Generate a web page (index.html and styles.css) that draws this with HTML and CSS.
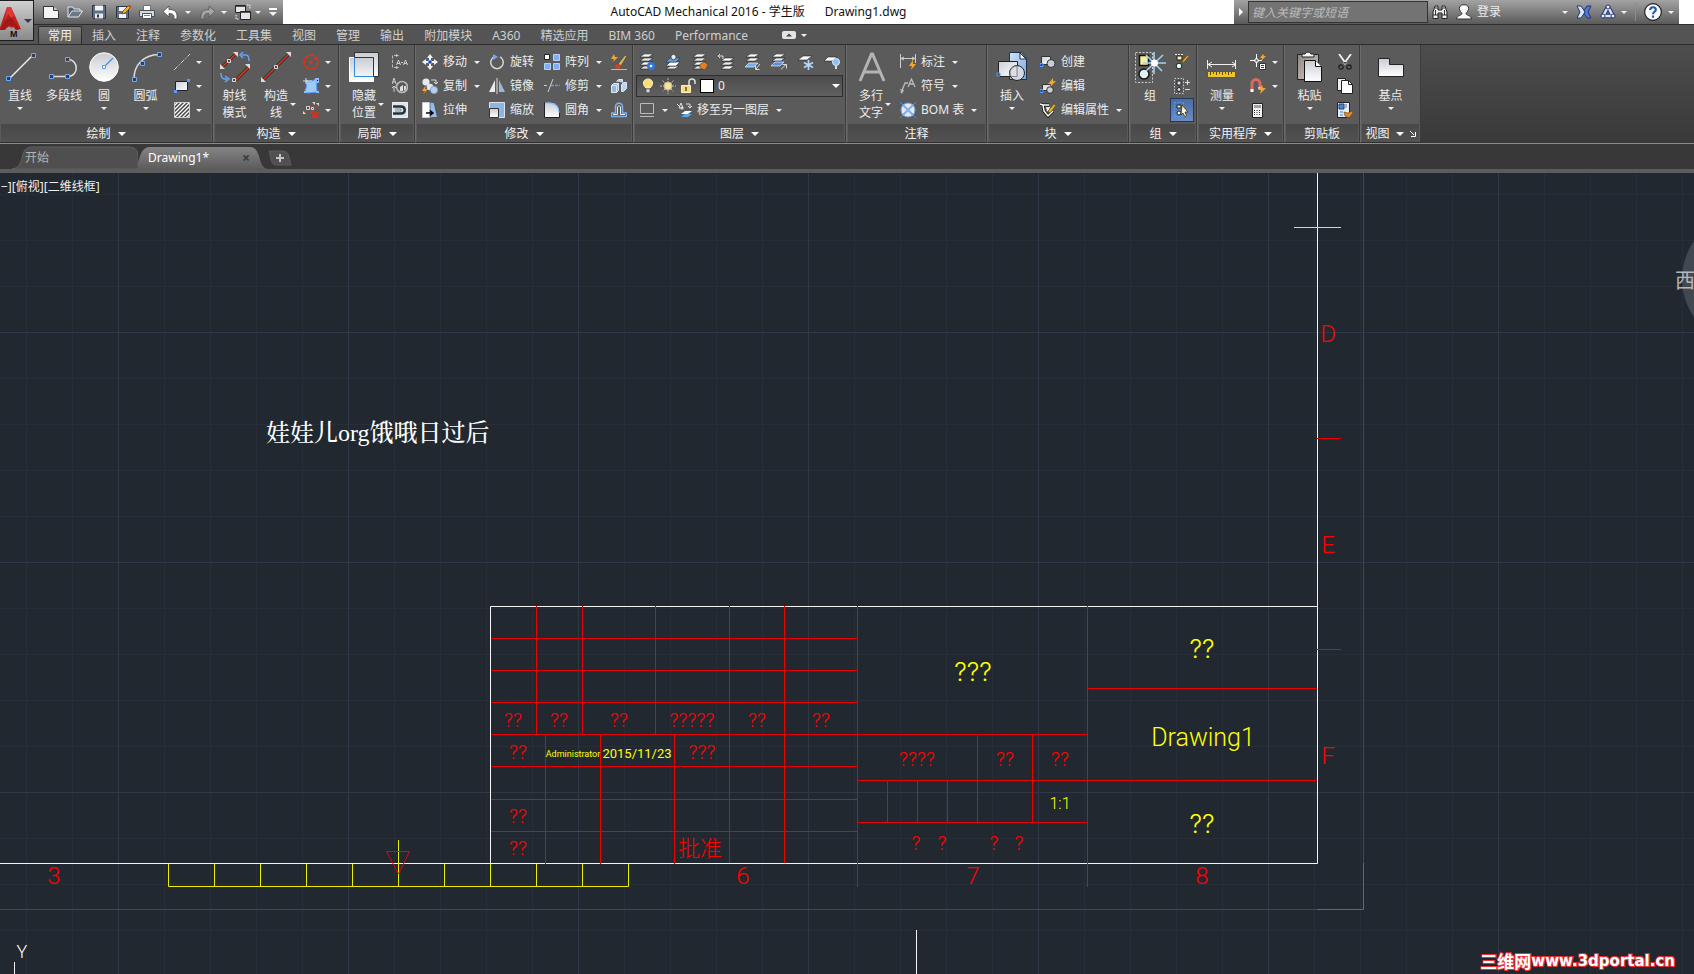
FILE: index.html
```html
<!DOCTYPE html>
<html lang="zh-CN">
<head>
<meta charset="utf-8">
<title>AutoCAD Mechanical 2016</title>
<link rel="stylesheet" href="styles.css">
</head>
<body>
<svg class="sprite" aria-hidden="true">
  <defs>
    <linearGradient id="silver" x1="0" y1="0" x2="1" y2="1"><stop offset="0" stop-color="#c9d0d8"/><stop offset="1" stop-color="#fff"/></linearGradient>
    <linearGradient id="sheet" x1="0" y1="0" x2="0" y2="1"><stop offset="0" stop-color="#c8ccd2"/><stop offset="1" stop-color="#fff"/></linearGradient>
    <linearGradient id="blue" x1="0" y1="0" x2="1" y2="1"><stop offset="0" stop-color="#cfe2f8"/><stop offset="1" stop-color="#7fa6dc"/></linearGradient>
    <linearGradient id="clip" x1="0" y1="0" x2="1" y2="1"><stop offset="0" stop-color="#8f8580"/><stop offset="1" stop-color="#d6cdc8"/></linearGradient>
    <pattern id="hatch" width="4" height="4" patternUnits="userSpaceOnUse"><path d="M-1 5L5-1M-1 1L1-1M3 5L5 3" stroke="#fff" stroke-width="1.300"/></pattern>
  </defs>
  <symbol id="new" viewBox="0 0 16 16"><path d="M.5 2.5h10l5 5v7H.5z" fill="#f4f4f4" stroke="#333"/><path d="M10.500 2.500v4h5" fill="#ccc" stroke="#333"/></symbol>
  <symbol id="open" viewBox="0 0 16 16"><path d="M1 13V3h5l1 2h6v3" fill="#555f6d" stroke="#dfe5ec"/><path d="M1 13l4-6h10.500l-4 6z" fill="#6b7787" stroke="#dfe5ec"/></symbol>
  <symbol id="save" viewBox="0 0 16 16"><path d="M1.500 1.500h13v13h-12l-1-1z" fill="#5f6f86" stroke="#2c3542"/><path d="M4 1.500h8v5H4z" fill="#f2f5f8"/><path d="M4 9.500h8v5H4z" fill="#e5e9ee"/><path d="M6 10.500h2v3H6z" fill="#2c3542"/></symbol>
  <symbol id="saveas" viewBox="0 0 16 16"><path d="M1.500 2.500h12v12h-11l-1-1z" fill="#5f6f86" stroke="#2c3542"/><path d="M4 3h7v4H4zM4 10h7v4H4z" fill="#f2f5f8"/><path d="M7 10l1-3 6-6 2 2-6 6z" fill="#f0b429" stroke="#5a3b0c" stroke-width=".7"/><path d="M13 2l2 2 1-1-2-2z" fill="#d9392b"/></symbol>
  <symbol id="print" viewBox="0 0 16 16"><path d="M4.500 1.500h7v5h-7z" fill="#fff" stroke="#68707c"/><path d="M.5 6.500h15v6H.5z" fill="#d5d9de" stroke="#4b525d"/><path d="M3.500 9.500h9v5h-9z" fill="#fff" stroke="#4b525d"/><path d="M5 11.500h6" stroke="#5b8ed0"/></symbol>
  <symbol id="undo" viewBox="0 0 16 16"><path d="M6 2v3.500c5 0 8 2 8 6.500v3h-3c.5-4-1-5.500-5-5.500V13L0 7.500z" fill="#fff" stroke="#444" stroke-width=".8"/></symbol>
  <symbol id="redo" viewBox="0 0 16 16"><path d="M10 2v3.500c-5 0-8 2-8 6.500v3h3c-.5-4 1-5.500 5-5.500V13l6-5.500z" fill="#a5a5a5" stroke="#555" stroke-width=".8"/></symbol>
  <symbol id="wswitch" viewBox="0 0 16 16"><path d="M.5 1.500h10v7H.5zM5.500 7.500h10v8h-10z" fill="#e2e5e9" stroke="#222"/><path d="M1 2.500h9M6 8.500h9" stroke="#555"/><path d="M12 1h3v4M1 11v4h3" fill="none" stroke="#fff" stroke-dasharray="1.500 1"/></symbol>
  <symbol id="binoc" viewBox="0 0 16 16"><path d="M1 14.500V8l2-6h3v4h4V2h3l2 6v6.500h-5V9H6v5.500z" fill="#e9edf0" stroke="#222"/><path d="M3 4h3M10 4h3M1 11h5M10 11h5M3.500 6v5M12.500 6v5" stroke="#333"/></symbol>
  <symbol id="user" viewBox="0 0 16 16"><path d="M6 9.500C1 4 4 .7 8 .7S15 4 10 9.500c0 2 5 1.500 5.500 5.500H.5C1 11 6 11.500 6 9.500z" fill="#f6f8fa" stroke="#333"/></symbol>
  <symbol id="exch" viewBox="0 0 16 16"><path d="M15 2h-4L7 8l4 6h4l-3-6z" fill="#4f78d8" stroke="#1f3470"/><path d="M1 2h4l4 6-4 6H1l3-6z" fill="#dfe7f8" stroke="#1f3470"/></symbol>
  <symbol id="a360" viewBox="0 0 16 16"><path d="M8 3L3 12h10z" fill="none" stroke="#1f3470" stroke-width="4.500" stroke-linejoin="round"/><path d="M8 3L3 12h10z" fill="none" stroke="#dce4f8" stroke-width="2.500"/><circle cx="8" cy="3" r="2" fill="#eef" stroke="#253a78"/><circle cx="3" cy="12" r="2" fill="#eef" stroke="#253a78"/><circle cx="13" cy="12" r="2" fill="#eef" stroke="#253a78"/></symbol>
  <symbol id="help" viewBox="0 0 16 16"><circle cx="8" cy="8" r="7.400" fill="#f8fafc" stroke="#1b1b1b"/><path d="M5.500 6.200C5.500 3 10.700 3 10.500 6c0 1.800-2.500 1.800-2.500 4M8 11v2" fill="none" stroke="#2458b0" stroke-width="1.900"/></symbol>

  <symbol id="line" viewBox="0 0 32 32"><path d="M5 28L29 4" stroke="#eee" stroke-width="1.500"/><path d="M2.500 25.500h4v4h-4zM27.500 2.500h4v4h-4z" fill="#333e50" stroke="#6fa8ff"/></symbol>
  <symbol id="pline" viewBox="0 0 32 32"><path d="M3 25.500h17c11 0 11-17 0-17h-2" fill="none" stroke="#ddd" stroke-width="1.500"/><path d="M1.500 23.500h4v4h-4zM17.500 23.500h4v4h-4zM17.500 6.500h4v4h-4z" fill="#333e50" stroke="#6fa8ff"/></symbol>
  <symbol id="circle" viewBox="0 0 32 32"><circle cx="16" cy="16" r="14.300" fill="url(#sheet)" stroke="#fff"/><path d="M16 16l9-9" stroke="#4b93e0" stroke-width="1.500"/><path d="M14.500 14.500h3v3h-3z" fill="#fff" stroke="#5b9bff"/></symbol>
  <symbol id="arc" viewBox="0 0 32 32"><path d="M4 28C4 14 13 4 29 3.500" fill="none" stroke="#ddd" stroke-width="1.500"/><path d="M2.500 26.500h4v4h-4zM10.500 10.500h4v4h-4zM27.500 1.500h4v4h-4z" fill="#333e50" stroke="#6fa8ff"/></symbol>
  <symbol id="cline" viewBox="0 0 16 16"><path d="M0 16L16 0" stroke="#ccc" stroke-dasharray="5 1.500 1.500 1.500"/></symbol>
  <symbol id="rect" viewBox="0 0 16 16"><path d="M1.500 3.500h12v9h-12z" fill="url(#silver)" stroke="#222"/><path d="M13 1h3v3h-3zM0 12h3v3H0z" fill="#5b9bff"/></symbol>
  <symbol id="hat" viewBox="0 0 16 16"><path d="M.5.5h15v15H.5z" fill="#444"/><path d="M.5.5h15v15H.5z" fill="url(#hatch)" stroke="#ccc"/></symbol>
  <symbol id="ray" viewBox="0 0 32 32"><path d="M3 16L17 3M17 29L30 16" stroke="#222" stroke-width="3"/><path d="M3 16L17 3M17 29L30 16" stroke="#e03a1a" stroke-width="1.700"/><path d="M14 1h5v5zM1 13v5h5zM26 13h5v5z" fill="#ddd"/><path d="M8.500 8.500h3v3h-3zM13.500 27.500h3v3h-3z" fill="#444" stroke="#ddd"/><path d="M23 4h4q3 0 3 6M24 1l-3 3 3 3M2 22q0 6 4 6h2M6 25l4 3-4 3" fill="none" stroke="#67a6f5" stroke-width="1.500"/></symbol>
  <symbol id="xline" viewBox="0 0 32 32"><path d="M3 29L29 3" stroke="#222" stroke-width="3"/><path d="M3 29L29 3" stroke="#e03a1a" stroke-width="1.600"/><path d="M26 1h5v5zM1 26v5h5z" fill="#ddd"/><path d="M14.500 14.500h3v3h-3z" fill="#444" stroke="#ddd"/></symbol>
  <symbol id="ccirc" viewBox="0 0 16 16"><circle cx="8" cy="8" r="7" fill="none" stroke="#e63214" stroke-width="1.600" stroke-dasharray="5 1.300"/><circle cx="8" cy="8" r="1.500" fill="#e63214"/><path d="M11 3h2v2h-2z" fill="#e63214"/></symbol>
  <symbol id="cpoly" viewBox="0 0 16 16"><path d="M4 15l-2-3c2-2 1-5 2-9l3 1 6-3 1 13z" fill="#9dcbf2" stroke="#5b9bff"/><path d="M1 14h3M13 14h3M3 3h2M13 1h3v3h-3zM6 3h3" stroke="#8bbcff" stroke-width="2"/><path d="M0 3h6M3 0v6" stroke="#ddd"/></symbol>
  <symbol id="cdel" viewBox="0 0 16 16"><path d="M1 11L12 1M7 12L15 3" stroke="#e03a1a" stroke-dasharray="3 1"/><path d="M9 0h3v3zM0 9v3h3zM13 1h3v3z" fill="#ddd"/><path d="M3.500 4.500h3v3h-3zM8.500 5.500h2v2h-2z" fill="#444" stroke="#ddd"/><path d="M9 10l6 6m0-6l-6 6" stroke="#e62b12" stroke-width="2.300"/></symbol>
  <symbol id="hide" viewBox="0 0 32 32"><path d="M6.500 1.500h24v24h-24z" fill="url(#sheet)" stroke="#333"/><path d="M1.500 6.500h24v24h-24z" fill="url(#sheet)" stroke="#fff"/><path d="M6.500 6.500h19v19h-19z" fill="none" stroke="#2f8ae6"/><path d="M6.500 1.500v5h19v19h5" fill="none" stroke="#333"/></symbol>
  <symbol id="sect" viewBox="0 0 16 16"><path d="M5 1.500H.5v12H5" fill="none" stroke="#bbb" stroke-dasharray="3 1.500"/><path d="M4 0l3 1.500L4 3zM4 12l3 1.500L4 15z" fill="#ccc"/><path d="M4.500 11l2-5 2 5M5 9.500h3M9 8.500h2M11.500 11l2-5 2 5M12 9.500h3" fill="none" stroke="#ccc"/></symbol>
  <symbol id="detail" viewBox="0 0 16 16"><circle cx="10" cy="9" r="5.500" fill="none" stroke="#bbb" stroke-width="1.600"/><path d="M8 13V9l3-2v6zM12 13V8h2v3z" fill="#ddd"/><path d="M0 6l2-6 2 6M1 4h3M2 8v6M0 10l2-2 2 2" fill="none" stroke="#ccc"/></symbol>
  <symbol id="brk" viewBox="0 0 16 16"><path d="M.5.5h15v15H.5z" fill="#dfe3e8" stroke="#eee"/><path d="M1 4.500h8c5 0 5 7 0 7H1" fill="none" stroke="#28323e" stroke-width="2.500"/><path d="M3 7h6v2H3" fill="none" stroke="#7b8794"/></symbol>
  <symbol id="move" viewBox="0 0 16 16"><path d="M8 0l3 4H9v2H7V4H5zM8 16l-3-4h2v-2h2v2h2zM0 8l4-3v2h2v2H4v2zM16 8l-4 3V9h-2V7h2V5z" fill="#f2f2f2"/><path d="M6.500 6.500h3v3h-3z" fill="#24467c" stroke="#5b9bff"/></symbol>
  <symbol id="copy" viewBox="0 0 16 16"><circle cx="4" cy="4" r="3.600" fill="#e5e9ee"/><circle cx="8" cy="9" r="3.300" fill="#dfe6ee"/><circle cx="12" cy="12" r="3.700" fill="#b8cdea" stroke="#6e8fbb" stroke-width=".7"/><path d="M9 2h5v4M12 4l2 2 2-2" fill="none" stroke="#ddd"/><path d="M4 7L0 13h3l-2 3 5-5H3z" fill="#f5a623"/></symbol>
  <symbol id="stretch" viewBox="0 0 16 16"><path d="M.5.5h9v15h-9z" fill="#fff" stroke="#ccc"/><path d="M8 .5h4l3.500 15H8z" fill="#9dbbe2" stroke="#2f4a73" stroke-width=".7"/><path d="M4 11h6M8 8.500l3 2.500-3 2.500" fill="none" stroke="#000" stroke-width="1.500"/></symbol>
  <symbol id="rotate" viewBox="0 0 16 16"><path d="M5 2.800A6.300 6.300 0 1 0 11 2.800" fill="none" stroke="#d8d8d8" stroke-width="1.500"/><path d="M4 0l5 3-5 3z" fill="#6fa8ff"/></symbol>
  <symbol id="mirror" viewBox="0 0 16 16"><path d="M6 2v12H0z" fill="#e8ecf0"/><path d="M10 2v12h6z" fill="#9cb6d6"/><path d="M8 0v16" stroke="#ddd"/></symbol>
  <symbol id="scale" viewBox="0 0 16 16"><path d="M.5.5h15v15h-6v-9h-9z" fill="#8fb3e2" stroke="#d9e4f2"/><path d="M.5 6.500h9v9h-9z" fill="url(#sheet)" stroke="#333"/></symbol>
  <symbol id="array" viewBox="0 0 16 16"><path d="M.5.5h5v5h-5z" fill="#fff" stroke="#222"/><path d="M9.500.5h6v6h-6zM.5 9.500h6v6h-6zM9.500 9.500h6v6h-6z" fill="#7fb0f5" stroke="#b5d2ff"/></symbol>
  <symbol id="trim" viewBox="0 0 16 16"><path d="M0 7.500h3M4 14L9 1" stroke="#ccc"/><path d="M7 7.500h9" stroke="#5b9bff" stroke-dasharray="3 1" stroke-width="1.300"/></symbol>
  <symbol id="fillet" viewBox="0 0 16 16"><path d="M.5.5h5q10 1 10 10v5H.5z" fill="url(#sheet)" stroke="#222"/><path d="M1 1h5q9 1 9 9.500" fill="none" stroke="#8fc0ff" stroke-width="1.500"/></symbol>
  <symbol id="erase" viewBox="0 0 16 16"><path d="M7 10l7-9 2 1-6 10z" fill="#d9b06a" stroke="#553"/><path d="M4 14c0-3 1-4 3-4l3 2-2 3z" fill="#d8411c"/><path d="M3 0L0 5h3l-1 3 5-5H4z" fill="#f5a623"/><path d="M0 15.500h16" stroke="#bbb"/></symbol>
  <symbol id="explode" viewBox="0 0 16 16"><path d="M.5 7.500l2-2h5v7l-2 2h-5z" fill="#9ab8de" stroke="#dbe8fa"/><path d="M.5 7.500h5v7M5.500 7.500l2-2" fill="none" stroke="#dbe8fa"/><path d="M5.500 3.500l2-2h4v3M10.500 6.500l2-2h3v6l-3 3h-2z" fill="#bcd2ee" stroke="#dbe8fa"/></symbol>
  <symbol id="offset" viewBox="0 0 16 16"><path d="M.5 14.500h15v-3.500h-4V5C11.500 0 4.500 0 4.500 5v6h-4z" fill="none" stroke="#7fb0f5" stroke-width="1.500"/><path d="M2 12.500h4.500V5q1.500-3 3 0v7.500H14" fill="none" stroke="#eee"/></symbol>

  <symbol id="stack" viewBox="0 0 16 16"><path d="M5 0h9l-4 3H1z" fill="#fff" stroke="#222" stroke-width=".6"/><path d="M5 4h9l-4 3H1z" fill="#e6ebf0" stroke="#222" stroke-width=".6"/><path d="M5 8h9l-4 3H1z" fill="#fff" stroke="#222" stroke-width=".6"/><path d="M5 12h9l-4 3H1z" fill="#dde3ea" stroke="#222" stroke-width=".6"/></symbol>
  <symbol id="ly1" viewBox="0 0 16 16"><use href="#stack"/><circle cx="12" cy="12" r="4" fill="#2b7bd6"/><circle cx="12" cy="12" r="1.300" fill="#fff"/></symbol>
  <symbol id="ly2" viewBox="0 0 16 16"><path d="M5 12h9l-4 3H1z" fill="#dde3ea" stroke="#222" stroke-width=".6"/><path d="M5 8h10l-4 4H1z" fill="#fff" stroke="#222" stroke-width=".6"/><path d="M5 4h10l-4 4H1z" fill="#5f9fe8" stroke="#1c3d6b" stroke-width=".6"/><circle cx="8.500" cy="3" r="2.700" fill="#eee" stroke="#444"/></symbol>
  <symbol id="ly3" viewBox="0 0 16 16"><use href="#stack"/><path d="M8 10l5-2 3 3-3 5-5-2z" fill="#d9822b" stroke="#6b3d0c" stroke-width=".6"/></symbol>
  <symbol id="ly4" viewBox="0 0 16 16"><path d="M7 4h9l-4 3H3z" fill="#fff" stroke="#222" stroke-width=".6"/><path d="M7 8h9l-4 3H3z" fill="#e6ebf0" stroke="#222" stroke-width=".6"/><path d="M7 12h9l-4 3H3z" fill="#fff" stroke="#222" stroke-width=".6"/><path d="M0 2h5v3M2 0L0 2l2 2" fill="none" stroke="#ddd"/></symbol>
  <symbol id="ly5" viewBox="0 0 16 16"><path d="M5 0h9l-4 3H1z" fill="#fff" stroke="#222" stroke-width=".6"/><path d="M5 4h9l-4 3H1z" fill="#fff" stroke="#222" stroke-width=".6"/><path d="M4 9h9l-4 4H0z" fill="#6fb1f0" stroke="#fff" stroke-width=".6"/><path d="M15 10l-4 5M10.500 12v3.500h4" fill="none" stroke="#ddd"/></symbol>
  <symbol id="ly6" viewBox="0 0 16 16"><path d="M5 0h9l-4 3H1z" fill="#fff" stroke="#222" stroke-width=".6"/><path d="M5 4h9l-4 3H1z" fill="#dfe8f6" stroke="#222" stroke-width=".6"/><path d="M4 8h9l-4 4H0z" fill="#5a8de8" stroke="#fff" stroke-width=".6"/><path d="M10 15.500l5-5M11.500 10.500h4v4" fill="none" stroke="#ddd"/></symbol>
  <symbol id="ly7" viewBox="0 0 16 16"><path d="M5 2h9l-5 4H0z" fill="#fff" stroke="#222" stroke-width=".6"/><path d="M10.500 6v10M6 8.500l9 5M15 8.500l-9 5" stroke="#b5d6f8" stroke-width="1.700"/></symbol>
  <symbol id="ly8" viewBox="0 0 16 16"><path d="M4 3h9L8 7H0z" fill="#fff" stroke="#222" stroke-width=".6"/><circle cx="12" cy="8" r="3.500" fill="#8dc0f4" stroke="#dcecff"/><path d="M11 12h2v3h-2z" fill="#ddd"/></symbol>
  <symbol id="bulb" viewBox="0 0 16 16"><path d="M6 10C1 5 4 1 8 1s7 4 2 9z" fill="#f8dd7a" stroke="#fff3c0"/><path d="M6 11h4v3l-2 1-2-1z" fill="#d5d5d5" stroke="#444" stroke-width=".6"/></symbol>
  <symbol id="sun" viewBox="0 0 16 16"><path d="M8 0v16M0 8h16M2.500 2.500l11 11M13.500 2.500l-11 11" stroke="#b9b9b9" stroke-dasharray="2 1"/><circle cx="8" cy="8" r="4" fill="#f6e2a2" stroke="#c9b878"/></symbol>
  <symbol id="lock" viewBox="0 0 16 16"><path d="M9 7V4c0-4 6-4 6 0v2" fill="none" stroke="#ddd" stroke-width="1.500"/><path d="M1.500 7.500h9v7h-9z" fill="#f4d98c" stroke="#fff0c0"/><path d="M6 9v4" stroke="#6a5213" stroke-width="1.500"/></symbol>
  <symbol id="lyf" viewBox="0 0 16 16"><path d="M1.500 1.500h13v10h-13z" fill="none" stroke="#bbb"/><path d="M1 14.500h14" stroke="#bbb"/></symbol>
  <symbol id="lymove" viewBox="0 0 16 16"><path d="M1 2l3 3M5 1l2 5H3z" fill="none" stroke="#ddd"/><circle cx="6" cy="6" r="1.500" fill="#ddd"/><path d="M10 2h4v4M12 4l2 2 2-2" fill="none" stroke="#ddd"/><path d="M9 9h7l-4 3H5z" fill="#fff"/><path d="M9 12h7l-4 3H5z" fill="#5aa7ee"/></symbol>

  <symbol id="mtext" viewBox="0 0 32 32"><path d="M5 30L16.500 3h1L29 30M9.500 21h15" fill="none" stroke="#b4b4b4" stroke-width="3"/></symbol>
  <symbol id="dim" viewBox="0 0 16 16"><path d="M.5 0v14M15.500 0v9M1 4.500h14M4 3L1 4.500 4 6M12 3l3 1.500L12 6" fill="none" stroke="#ccc"/><path d="M13 6l-4 6h3l-1 4 5-6h-3z" fill="#f5a623"/></symbol>
  <symbol id="sym" viewBox="0 0 16 16"><path d="M1 15l4-10h3M8 9l3.500-8L15 9M9 6h5" fill="none" stroke="#bbb" stroke-width="1.300"/><path d="M0 11l2 5 2-4z" fill="#bbb"/></symbol>
  <symbol id="bom" viewBox="0 0 16 16"><circle cx="8" cy="8" r="7" fill="#e1eaf6" stroke="#6f9fe0"/><path d="M0 0l16 16M16 0L0 16" stroke="#4f8fee"/><path d="M3 3l10 10M13 3L3 13" stroke="#86aee8" stroke-width="2"/></symbol>
  <symbol id="insert" viewBox="0 0 32 32"><path d="M13.500 1.500h12l5 6v21h-17z" fill="url(#blue)" stroke="#1f2f4a"/><path d="M24 2v6h6z" fill="#fff" stroke="#1f2f4a"/><path d="M2.500 10.500h19v15h-19z" fill="url(#silver)" stroke="#222"/><circle cx="21" cy="22" r="7.500" fill="#d9dde2" fill-opacity=".9" stroke="#222"/><path d="M14 22a7 7 0 0 1 7-7v10.500h-6z" fill="none" stroke="#888"/><path d="M1 22h3v3H1z" fill="#24467c" stroke="#5b9bff"/></symbol>
  <symbol id="bnew" viewBox="0 0 16 16"><path d="M1.500 2.500h9v8h-9z" fill="url(#silver)" stroke="#333"/><circle cx="11" cy="9.500" r="4" fill="#c9ced5" stroke="#333"/><path d="M0 9.500h3v3H0z" fill="#24467c" stroke="#5b9bff"/></symbol>
  <symbol id="bedit" viewBox="0 0 16 16"><path d="M2.500 6.500h8v6h-8z" fill="url(#silver)" stroke="#333"/><circle cx="10" cy="12" r="3.300" fill="#c9ced5" stroke="#333"/><path d="M13 0L8 6h3l-1 3 6-6h-3z" fill="#f5a623"/><path d="M0 11.500h3v3H0z" fill="#24467c" stroke="#5b9bff"/></symbol>
  <symbol id="battr" viewBox="0 0 16 16"><path d="M0 2l3 1h6M3 3l1 6 4 5 5-5" fill="none" stroke="#111" stroke-width="3"/><path d="M0 2l3 1h6M3 3l1 6 4 5 5-5M6 6h3l-2 3" fill="none" stroke="#fff" stroke-width="1.500"/><path d="M8 11l1-3 5-6 2 1-5 7z" fill="#f0b429" stroke="#5a3b0c" stroke-width=".6"/></symbol>
  <symbol id="group" viewBox="0 0 32 32"><path d="M1.500 1.500h17v30h-17z" fill="none" stroke="#ccc" stroke-dasharray="2 1.500"/><path d="M5.500 4.500h9v10h-9z" fill="#f5ee9a" stroke="#111" stroke-width="1.500"/><circle cx="10" cy="23" r="5" fill="#dfeff2" stroke="#111" stroke-width="1.500"/><path d="M20 1v22M9 12h23M12 20L29 4M12 4l16 16" stroke="#9fd2f5" stroke-width="1.600"/><circle cx="20.500" cy="12" r="3.500" fill="#fff"/></symbol>
  <symbol id="gedit" viewBox="0 0 16 16"><path d="M1 .5h9" stroke="#eee" stroke-dasharray="2 1"/><path d="M3 2h5v4H3z" fill="#f5ee9a" stroke="#222"/><circle cx="5" cy="12" r="2.800" fill="#dff" stroke="#222"/><path d="M8 9l1-3 5-5 1 1-5 6z" fill="#f0b429" stroke="#5a3b0c" stroke-width=".5"/></symbol>
  <symbol id="gadd" viewBox="0 0 16 16"><path d="M.5.5h9v15h-9z" fill="none" stroke="#ccc" stroke-dasharray="1.500 1.500"/><path d="M3 3h4v4H3z" fill="#ddd" stroke="#222"/><circle cx="5" cy="11.500" r="2" fill="#cdf" stroke="#222"/><path d="M11 4.500h5M13.500 2v5M11 11.500h5" stroke="#ddd"/></symbol>
  <symbol id="gsel" viewBox="0 0 16 16"><path d="M.5.5h9v14h-9z" fill="none" stroke="#5b9bff" stroke-dasharray="1.500 1.500"/><path d="M3 3h4v3H3z" fill="#f5ee9a" stroke="#222"/><circle cx="5" cy="11" r="2" fill="#dfe" stroke="#222"/><path d="M8 3l6 7h-3l1.500 4-1.500 1-2-4-2 2z" fill="#fff7c8" stroke="#222" stroke-width=".7"/></symbol>
  <symbol id="measure" viewBox="0 0 32 32"><path d="M1.500 9v9M29.500 9v9M2 13.500h28M6 11l-4 2.500L6 16M26 11l4 2.500-4 2.500" fill="none" stroke="#eee"/><path d="M1.500 20.500h28v6h-28z" fill="#efc52c" stroke="#6e5710"/><path d="M4.500 21v3M7.500 21v2M10.500 21v3M13.500 21v2M16.500 21v3M19.500 21v2M22.500 21v3M25.500 21v2" stroke="#5d490c"/></symbol>
  <symbol id="qsel" viewBox="0 0 16 16"><path d="M0 6.500h12M6.500 0v13" stroke="#fff"/><path d="M5 5h3v3H5z" fill="#555" stroke="#fff"/><path d="M9.500 9.500h6v6h-6z" fill="#fff" stroke="#333"/><path d="M11 11.500h3M11 13.500h3" stroke="#333"/><path d="M13 0l-3 4h2l-1 3 5-5h-2z" fill="#f5a623"/></symbol>
  <symbol id="magnet" viewBox="0 0 16 16"><path d="M2 13V6c0-6 8-6 8 0v5" fill="none" stroke="#d96a63" stroke-width="3"/><path d="M.5 11h3v3h-3zM8.500 9h3v2h-3z" fill="#fff"/><path d="M12 7l-4 5h3l-1 4 6-6h-3z" fill="#f5a623"/></symbol>
  <symbol id="calc" viewBox="0 0 16 16"><path d="M2.500 1.500h10v14h-10z" fill="#f2f2f2" stroke="#222"/><path d="M4 3h7v3H4z" fill="#9aa4b0"/><path d="M4 8.500h7M4 10.500h7M4 12.500h7" stroke="#333" stroke-dasharray="1 1.500"/></symbol>
  <symbol id="paste" viewBox="0 0 32 32"><path d="M3.500 3.500h21v25h-21z" fill="url(#clip)" stroke="#222"/><path d="M8 5V3h3q3-4 6 0h3v3H8z" fill="#f5f5f5" stroke="#222"/><path d="M10.500 9.500h11l6 6v15h-17z" fill="url(#sheet)" stroke="#111"/><path d="M21.500 9.500v6h6" fill="#fff" stroke="#111"/></symbol>
  <symbol id="cut" viewBox="0 0 16 16"><path d="M2 0l8 11M14 0L6 11" stroke="#f2f2f2" stroke-width="1.800"/><circle cx="4" cy="13" r="2.200" fill="none" stroke="#1c1c1c" stroke-width="1.200"/><circle cx="12" cy="13" r="2.200" fill="none" stroke="#1c1c1c" stroke-width="1.200"/><path d="M6 11l2-3 2 3" fill="none" stroke="#1c1c1c"/></symbol>
  <symbol id="cpy" viewBox="0 0 16 16"><path d="M.5.5h8v12h-8z" fill="#eee" stroke="#222"/><path d="M4.500 2.500h7l4 4v9h-11z" fill="#fff" stroke="#222"/><path d="M11.500 2.500v4h4" fill="none" stroke="#222"/></symbol>
  <symbol id="match" viewBox="0 0 16 16"><path d="M.5.5h12v15H.500z" fill="#e8eef6" stroke="#222"/><path d="M2 2h5v5H2z" fill="#4a86d8" stroke="#1d3f74"/><path d="M9 2v4M3 10h3M3 13h3" stroke="#3f78c4"/><path d="M7 10l4 1 4-2 1 2-4 5-4-2z" fill="#dc8a30" stroke="#6b3d0c" stroke-width=".6"/></symbol>
  <symbol id="base" viewBox="0 0 32 32"><path d="M3.500 7.500h11v6h14v12h-25z" fill="url(#sheet)" stroke="#222"/></symbol>
</svg>

<header class="titlebar">
  <div class="quick">
    <button aria-label="新建"><svg class="i16"><use href="#new"/></svg></button>
    <button aria-label="打开"><svg class="i16"><use href="#open"/></svg></button>
    <button aria-label="保存"><svg class="i16"><use href="#save"/></svg></button>
    <button aria-label="另存为"><svg class="i16"><use href="#saveas"/></svg></button>
    <button aria-label="打印"><svg class="i16"><use href="#print"/></svg></button>
    <button aria-label="放弃"><svg class="i16"><use href="#undo"/></svg><i class="dd"></i></button>
    <button aria-label="重做"><svg class="i16"><use href="#redo"/></svg><i class="dd"></i></button>
    <button class="ws" aria-label="工作空间"><svg class="i16"><use href="#wswitch"/></svg><i class="dd"></i></button>
    <button class="more" aria-label="自定义"><i class="dd"></i></button>
  </div>
  <h1 class="caption"><span>AutoCAD Mechanical 2016 - 学生版</span><span>Drawing1.dwg</span></h1>
  <div class="info">
    <button class="fold" aria-label="收拢"><i class="right"></i></button>
    <input class="search" type="text" aria-label="搜索" placeholder="键入关键字或短语">
    <button aria-label="查找"><svg class="i16"><use href="#binoc"/></svg></button>
    <button class="login"><svg class="i16"><use href="#user"/></svg>登录<i class="dd"></i></button>
    <button aria-label="Exchange"><svg class="i16"><use href="#exch"/></svg></button>
    <button aria-label="A360"><svg class="i16"><use href="#a360"/></svg><i class="dd"></i></button>
    <button class="help" aria-label="帮助"><svg class="i18"><use href="#help"/></svg><i class="dd"></i></button>
  </div>
</header>
<button class="appmenu" aria-label="应用程序菜单">
  <svg width="22" height="40" viewBox="0 0 22 40"><path d="M-1 29L7 6h4l10 22-5 1-2-4-2 2-4-2-3 4z" fill="#c31f1f"/><path d="M7 6h4l3 9-9 5z" fill="#e23a34"/><path d="M8 13l-8 16h4l7-5 5 5 4-1z" fill="#8f1212" fill-opacity=".6"/></svg>
  <b>M</b><i class="dd dark"></i>
</button>

<nav class="tabs">
  <button class="tab on">常用</button><button class="tab">插入</button><button class="tab">注释</button><button class="tab">参数化</button><button class="tab">工具集</button><button class="tab">视图</button><button class="tab">管理</button><button class="tab">输出</button><button class="tab">附加模块</button><button class="tab">A360</button><button class="tab">精选应用</button><button class="tab">BIM 360</button><button class="tab">Performance</button>
  <button class="mini" aria-label="最小化功能区"><svg width="14" height="8" viewBox="0 0 14 8"><rect width="14" height="8" rx="2" fill="#e4e4e4"/><path d="M4 5.500h6L7 2.500z" fill="#444"/></svg><i class="dd"></i></button>
</nav>

<div class="ribbon">
  <section class="panel draw">
    <div class="body">
      <button class="big"><svg class="i32"><use href="#line"/></svg><span>直线</span><i class="dd"></i></button>
      <button class="big"><svg class="i32"><use href="#pline"/></svg><span>多段线</span></button>
      <button class="big"><svg class="i32"><use href="#circle"/></svg><span>圆</span><i class="dd"></i></button>
      <button class="big"><svg class="i32"><use href="#arc"/></svg><span>圆弧</span><i class="dd"></i></button>
      <div class="col">
        <button aria-label="中心线"><svg class="i16"><use href="#cline"/></svg><i class="dd"></i></button>
        <button aria-label="矩形"><svg class="i16"><use href="#rect"/></svg><i class="dd"></i></button>
        <button aria-label="图案填充"><svg class="i16"><use href="#hat"/></svg><i class="dd"></i></button>
      </div>
    </div>
    <button class="name">绘制<i class="dd lg"></i></button>
  </section>
  <section class="panel cons">
    <div class="body">
      <button class="big"><svg class="i32"><use href="#ray"/></svg><span>射线<br>模式</span></button>
      <button class="big side"><svg class="i32"><use href="#xline"/></svg><span>构造<br>线</span><i class="dd"></i></button>
      <div class="col">
        <button aria-label="构造圆"><svg class="i16"><use href="#ccirc"/></svg><i class="dd"></i></button>
        <button aria-label="投影"><svg class="i16"><use href="#cpoly"/></svg><i class="dd"></i></button>
        <button aria-label="删除构造线"><svg class="i16"><use href="#cdel"/></svg><i class="dd"></i></button>
      </div>
    </div>
    <button class="name">构造<i class="dd lg"></i></button>
  </section>
  <section class="panel local">
    <div class="body">
      <button class="big side"><svg class="i32"><use href="#hide"/></svg><span>隐藏<br>位置</span><i class="dd"></i></button>
      <div class="col">
        <button aria-label="剖切线"><svg class="i16"><use href="#sect"/></svg></button>
        <button aria-label="局部视图"><svg class="i16"><use href="#detail"/></svg></button>
        <button aria-label="断开"><svg class="i16"><use href="#brk"/></svg></button>
      </div>
    </div>
    <button class="name">局部<i class="dd lg"></i></button>
  </section>
  <section class="panel modify">
    <div class="body">
      <button><svg class="i16"><use href="#move"/></svg>移动<i class="dd"></i></button>
      <button><svg class="i16"><use href="#rotate"/></svg>旋转</button>
      <button><svg class="i16"><use href="#array"/></svg>阵列<i class="dd"></i></button>
      <button aria-label="删除"><svg class="i16"><use href="#erase"/></svg></button>
      <button><svg class="i16"><use href="#copy"/></svg>复制<i class="dd"></i></button>
      <button><svg class="i16"><use href="#mirror"/></svg>镜像</button>
      <button><svg class="i16"><use href="#trim"/></svg>修剪<i class="dd"></i></button>
      <button aria-label="分解"><svg class="i16"><use href="#explode"/></svg></button>
      <button><svg class="i16"><use href="#stretch"/></svg>拉伸</button>
      <button><svg class="i16"><use href="#scale"/></svg>缩放</button>
      <button><svg class="i16"><use href="#fillet"/></svg>圆角<i class="dd"></i></button>
      <button aria-label="偏移"><svg class="i16"><use href="#offset"/></svg></button>
    </div>
    <button class="name">修改<i class="dd lg"></i></button>
  </section>
  <section class="panel layer">
    <div class="body">
      <div class="row spread">
        <button aria-label="图层特性"><svg class="i16"><use href="#ly1"/></svg></button>
        <button aria-label="置为当前"><svg class="i16"><use href="#ly2"/></svg></button>
        <button aria-label="匹配图层"><svg class="i16"><use href="#ly3"/></svg></button>
        <button aria-label="上一个图层"><svg class="i16"><use href="#ly4"/></svg></button>
        <button aria-label="隔离"><svg class="i16"><use href="#ly5"/></svg></button>
        <button aria-label="取消隔离"><svg class="i16"><use href="#ly6"/></svg></button>
        <button aria-label="冻结"><svg class="i16"><use href="#ly7"/></svg></button>
        <button aria-label="关闭图层"><svg class="i16"><use href="#ly8"/></svg></button>
      </div>
      <div class="row">
        <div class="combo">
          <svg class="i16"><use href="#bulb"/></svg><svg class="i16"><use href="#sun"/></svg><svg class="i16"><use href="#lock"/></svg><i class="swatch"></i>
          <select aria-label="当前图层"><option>0</option></select><i class="dd lg"></i>
        </div>
      </div>
      <div class="row to">
        <button aria-label="图层过滤"><svg class="i16"><use href="#lyf"/></svg><i class="dd"></i></button>
        <button><svg class="i16"><use href="#lymove"/></svg>移至另一图层<i class="dd"></i></button>
      </div>
    </div>
    <button class="name">图层<i class="dd lg"></i></button>
  </section>
  <section class="panel note">
    <div class="body">
      <button class="big side"><svg class="i32"><use href="#mtext"/></svg><span>多行<br>文字</span><i class="dd"></i></button>
      <div class="col">
        <button><svg class="i16"><use href="#dim"/></svg>标注<i class="dd"></i></button>
        <button><svg class="i16"><use href="#sym"/></svg>符号<i class="dd"></i></button>
        <button><svg class="i16"><use href="#bom"/></svg>BOM 表<i class="dd"></i></button>
      </div>
    </div>
    <div class="name">注释</div>
  </section>
  <section class="panel block">
    <div class="body">
      <button class="big"><svg class="i32"><use href="#insert"/></svg><span>插入</span><i class="dd"></i></button>
      <div class="col">
        <button><svg class="i16"><use href="#bnew"/></svg>创建</button>
        <button><svg class="i16"><use href="#bedit"/></svg>编辑</button>
        <button><svg class="i16"><use href="#battr"/></svg>编辑属性<i class="dd"></i></button>
      </div>
    </div>
    <button class="name">块<i class="dd lg"></i></button>
  </section>
  <section class="panel grp">
    <div class="body">
      <button class="big"><svg class="i32"><use href="#group"/></svg><span>组</span></button>
      <div class="col">
        <button aria-label="组编辑"><svg class="i16"><use href="#gedit"/></svg></button>
        <button aria-label="添加到组"><svg class="i16"><use href="#gadd"/></svg></button>
        <button class="on" aria-label="组选择"><svg class="i16"><use href="#gsel"/></svg></button>
      </div>
    </div>
    <button class="name">组<i class="dd lg"></i></button>
  </section>
  <section class="panel util">
    <div class="body">
      <button class="big"><svg class="i32"><use href="#measure"/></svg><span>测量</span><i class="dd"></i></button>
      <div class="col">
        <button aria-label="快速选择"><svg class="i16"><use href="#qsel"/></svg><i class="dd"></i></button>
        <button aria-label="捕捉"><svg class="i16"><use href="#magnet"/></svg><i class="dd"></i></button>
        <button aria-label="计算器"><svg class="i16"><use href="#calc"/></svg></button>
      </div>
    </div>
    <button class="name">实用程序<i class="dd lg"></i></button>
  </section>
  <section class="panel clipb">
    <div class="body">
      <button class="big"><svg class="i32"><use href="#paste"/></svg><span>粘贴</span><i class="dd"></i></button>
      <div class="col">
        <button aria-label="剪切"><svg class="i16"><use href="#cut"/></svg></button>
        <button aria-label="复制"><svg class="i16"><use href="#cpy"/></svg></button>
        <button aria-label="特性匹配"><svg class="i16"><use href="#match"/></svg></button>
      </div>
    </div>
    <div class="name">剪贴板</div>
  </section>
  <section class="panel view">
    <div class="body">
      <button class="big"><svg class="i32"><use href="#base"/></svg><span>基点</span><i class="dd"></i></button>
    </div>
    <button class="name">视图<i class="dd lg"></i><svg class="launch" width="6" height="6" viewBox="0 0 6 6"><path d="M0 0l4 4M5.500 1v4.500H1" fill="none" stroke="#fff"/></svg></button>
  </section>
</div>

<div class="files">
  <button class="file start"><svg viewBox="0 0 126 23" preserveAspectRatio="none"><path d="M0 23C8 22 9 16 11 8Q13 1 20 1H117Q126 1 126 10V23z" fill="#4f4f4f" stroke="#606060"/></svg><span>开始</span></button>
  <button class="file open"><svg viewBox="0 0 130 23" preserveAspectRatio="none"><defs><linearGradient id="tabfill" x2="0" y2="1"><stop offset="0" stop-color="#858585"/><stop offset="1" stop-color="#5c5c5c"/></linearGradient></defs><path d="M0 16C2 12 3 1 12 1H112C124 1 119 22 130 23H0z" fill="url(#tabfill)"/></svg><span>Drawing1*</span><em>×</em></button>
  <button class="plus" aria-label="新图形"><svg width="24" height="16" viewBox="0 0 24 16"><path d="M1 1h14q5 0 6 6l2 8H8Q4 15 3 9z" fill="#505050" stroke="#5c5c5c"/><path d="M12 4v8M8 8h8" stroke="#c4c4c4" stroke-width="2"/></svg></button>
</div>

<main class="canvas">
  <svg class="drawing" role="img" aria-label="图纸">
    <defs>
      <pattern id="minor" x="26" y="21" width="46" height="46" patternUnits="userSpaceOnUse"><path d="M.5 0v46M0 .5h46" stroke="#272e38"/></pattern>
      <pattern id="major" x="118" y="159" width="230" height="230" patternUnits="userSpaceOnUse"><path d="M.5 0v230M0 .5h230" stroke="#303746"/></pattern>
    </defs>
    <rect class="fill-minor" width="100%" height="100%"/>
    <rect class="fill-major" width="100%" height="100%"/>
    <g transform="translate(0 -173)">
      <circle class="cube" cx="1748" cy="279" r="66"/>
      <text class="cube-text" x="1675" y="288">西</text>
      <path class="ln y" d="M168.500 863v23.500H628.500V863M214.500 863v23M260.500 863v23M306.500 863v23M352.500 863v23M398.500 840v46M444.500 863v23M490.500 863v23M536.500 863v23M582.500 863v23"/>
      <path class="ln w" d="M0 863.500H1317.500V173M490.500 863V606.500H1317"/>
      <path class="ln y" d="M1294 227.500h47M398.500 840v34"/>
      <path class="ln r" d="M386.500 851.500h23L398.500 874z"/>
      <path class="ln r" d="M0 909.500H1363.500V173M1317 438.500h24M1317 649.500h24"/>
      <path class="ln r" d="M536.500 606v128M582.500 606v128M655.500 606v128M729.500 606v257M784.500 606v257M857.500 606v281M1087.500 606v281M545.500 734v130M600.500 734v130M674.500 734v130M977.500 734v88M1032.500 734v88M887.500 780v42M917.500 780v42M947.500 780v42"/>
      <path class="ln r" d="M491 638.500h366M491 670.500h366M491 702.500h366M491 734.500h596M491 766.500h366M491 799.500h366M491 831.500h366M857 780.500h460M857 822.500h230M1087 688.500h230"/>
      <path class="ln hot" d="M1317 909.500h46.500V863"/>
      <path class="ln w" d="M916.500 930v44M14.500 962v12"/>
      <g class="cad red small">
        <text x="513" y="727">??</text><text x="559" y="727">??</text><text x="619" y="727">??</text><text x="692" y="727">?????</text><text x="757" y="727">??</text><text x="821" y="727">??</text>
        <text x="518" y="759">??</text><text x="702" y="759">???</text><text x="518" y="823">??</text><text x="518" y="855">??</text>
        <text x="917" y="766">????</text><text x="1005" y="766">??</text><text x="1060" y="766">??</text>
        <text x="916" y="850">?</text><text x="942" y="850">?</text><text x="994" y="850">?</text><text x="1019" y="850">?</text>
      </g>
      <text class="cad red cjk" x="700" y="856">批准</text>
      <g class="cad red zone">
        <text x="54" y="884">3</text><text x="743" y="884">6</text><text x="973" y="884">7</text><text x="1202" y="884">8</text>
        <text x="1328" y="342">D</text><text x="1328" y="553">E</text><text x="1328" y="764">F</text>
      </g>
      <g class="cad yel large">
        <text x="973" y="681">???</text><text x="1202" y="658">??</text><text x="1202" y="833">??</text>
      </g>
      <text class="cad yel title" x="1203" y="746">Drawing1</text>
      <text class="cad yel narrow" x="573" y="757">Administrator</text>
      <text class="cad yel date" x="637" y="758">2015/11/23</text>
      <text class="cad yel ratio" x="1060" y="809">1:1</text>
      <text class="cad axis" x="22" y="958">Y</text>
      <text class="mtext" x="266" y="441">娃娃儿org饿哦日过后</text>
      <text class="viewlabel" x="1" y="191">−][俯视][二维线框]</text>
    </g>
  </svg>
  <a class="mark" href="#">三维网<span>www.3dportal.cn</span></a>
</main>
</body>
</html>
```

FILE: styles.css
```css
* { box-sizing: border-box; }
body {
  margin: 0;
  height: 100vh;
  overflow: hidden;
  display: flex;
  flex-direction: column;
  position: relative;
  background: #383838;
  color: #ececec;
  font: 12px/16px "Noto Sans", "Noto Sans CJK SC", sans-serif;
}
button, input, select {
  font: inherit;
  color: inherit;
  background: none;
  border: 0;
  padding: 0;
  margin: 0;
}
button {
  display: flex;
  align-items: center;
  white-space: nowrap;
}
svg { display: block; flex: none; }
.sprite { position: absolute; width: 0; height: 0; }
.i16 { width: 16px; height: 16px; }
.i18 { width: 18px; height: 18px; }
.i32 { width: 32px; height: 32px; }

.dd {
  flex: none;
  width: 0;
  height: 0;
  border: 3px solid transparent;
  border-top-color: #f0f0f0;
  border-bottom: 0;
}
.dd.lg { border-width: 4px; border-bottom: 0; border-top-color: #fff; }
.dd.dark { border-width: 4px; border-bottom: 0; border-top-color: #333b48; }

/* title bar */
.titlebar {
  flex: none;
  height: 24px;
  display: flex;
  justify-content: space-between;
  background: #fff;
  padding-right: 15px;
}
.quick, .info {
  display: flex;
  flex: none;
  align-items: center;
  background: linear-gradient(#a3a3a3, #5a5a5a);
}
.quick { width: 283px; padding-left: 43px; gap: 8px; }
.quick .dd { margin-left: 6px; }
.quick .ws .dd { margin-left: 4px; }
.quick .more { flex-direction: column; gap: 2px; }
.quick .more .dd { margin: 0; border-width: 4px; border-bottom: 0; }
.quick .more::before { content: ""; width: 8px; height: 2px; background: #fff; }
.caption {
  margin: 0;
  display: flex;
  gap: 20px;
  font-size: 12px;
  font-weight: 400;
  line-height: 24px;
  color: #111;
}
.info { width: 445px; }
.fold { width: 14px; height: 24px; justify-content: center; }
.right { border: 4px solid transparent; border-left-color: #fff; border-right: 0; }
.search {
  width: 180px;
  height: 22px;
  padding: 0 3px;
  background: #737373;
  border: 1px solid #333;
  font-style: italic;
}
.search::placeholder { color: #bdbdbd; opacity: 1; }
.info > button + button { margin-left: 8px; }
.info > .search + button { margin-left: 4px; }
.info .dd { margin-left: 5px; }
.login { width: 112px; }
.login svg { margin-right: 5px; }
.login .dd { margin-left: auto; }
.help { border-left: 1px solid #8c8c8c; padding-left: 8px; }
.help .dd { margin-left: 6px; }

.appmenu {
  position: absolute;
  left: 0;
  top: 0;
  width: 34px;
  height: 41px;
  background: linear-gradient(#d0d0d0, #8a8a8a);
  border: 1px solid #1e1e1e;
  border-left: 0;
}
.appmenu b {
  position: absolute;
  left: 10px;
  bottom: 1px;
  font: bold 9px/9px "Liberation Sans", sans-serif;
  color: #111;
}
.appmenu .dd { margin-left: 2px; }

/* ribbon tabs */
.tabs {
  flex: none;
  height: 21px;
  padding-left: 38px;
  display: flex;
  align-items: flex-end;
  background: #545454;
  border-top: 1px solid #2c2c2c;
  border-bottom: 1px solid #2c2c2c;
}
.tab { height: 18px; padding: 1px 10px 0; color: #cfcfcf; line-height: 17px; }
.tab.on {
  padding: 0 9px;
  border: 1px solid #2c2c2c;
  border-bottom: 0;
  border-radius: 2px 2px 0 0;
  background: linear-gradient(#787878, #5b5b5b);
  color: #f0f0f0;
}
.mini { height: 18px; margin-left: 24px; gap: 5px; }

/* ribbon panels */
.ribbon {
  flex: none;
  display: grid;
  grid-template-columns: 213px 126px 76px 218px 213px 141px 142px 68px 87px 76px 61px;
  background: linear-gradient(#4d4d4d, #393939);
  border-bottom: 1px solid #8a8a8a;
}
.panel {
  display: flex;
  flex-direction: column;
  height: 98px;
  border-left: 1px solid #6c6c6c;
  border-right: 1px solid #3b3b3b;
  border-bottom: 1px solid #2f2f2f;
  background: #5b5b5b;
}
.panel.draw { border-left: 0; }
.body { flex: 1; display: grid; padding-top: 5px; align-content: start; }
.name {
  height: 18px;
  padding: 1px 2px 0;
  margin: 0 1px;
  display: flex;
  align-items: center;
  justify-content: center;
  gap: 7px;
  background: linear-gradient(#484848, #525252);
  color: #f2f2f2;
}
.big {
  position: relative;
  flex-direction: column;
  height: 72px;
  padding-top: 1px;
  line-height: 17px;
  text-align: center;
}
.big span { margin-top: 4px; }
.big .dd { margin-top: 3px; }
.side .dd { position: absolute; left: calc(50% + 14px); top: 53px; margin: 0; }
.col { display: flex; flex-direction: column; }
.col button, .modify .body button, .row { height: 24px; }
.col .i16, .modify .i16, .to .i16 { margin-right: 5px; }
.col .dd { margin-left: 7px; }
.draw .body { grid-template-columns: 40px 48px 32px 54px 1fr; }
.draw .body .big:nth-child(4) { padding-right: 3px; }
.draw .col .dd, .cons .col .dd, .util .col .dd { margin-left: 1px; }
.cons .body { grid-template-columns: 41px 42px 1fr; }
.cons .col { padding-left: 6px; }
.local .body { grid-template-columns: 48px 1fr; }
.local .col { padding-left: 4px; }
.modify .body { grid-template-columns: 67px 55px 67px 1fr; padding-left: 6px; }
.modify .body .dd { margin-left: 7px; }
.note .body { grid-template-columns: 48px 1fr; }
.note .col { padding-left: 5px; }
.clipb .body { grid-template-columns: 49px 1fr; }
.clipb .col { padding-left: 3px; }
.block .col, .util .col { padding-left: 4px; }
.block .body, .util .body { grid-template-columns: 48px 1fr; }
.grp .body { grid-template-columns: 40px 24px; }
.grp .col button { justify-content: center; }
.grp .col .i16 { margin: 0; }
.grp .on { background: linear-gradient(#4a6ca0, #6a8cc4); border: 1px solid #22365a; }
.view .name { gap: 6px; }
.row { display: flex; align-items: center; padding: 0 5px; }
.spread { justify-content: space-between; }
.to { gap: 8px; }
.to .dd { margin-left: 7px; }
.to button:first-child .dd { margin-left: 2px; }
.layer .row:nth-child(2) { padding: 0 2px; }
.combo {
  flex: 1;
  height: 22px;
  display: flex;
  align-items: center;
  gap: 4px;
  padding: 0 2px 0 3px;
  background: linear-gradient(#4c4c4c, #606060);
  border: 1px solid #2e2e2e;
}
.swatch { width: 14px; height: 14px; background: #fff; border: 1px solid #000; }
.combo select { flex: 1; appearance: none; }

/* document tabs */
.files {
  flex: none;
  height: 29px;
  padding: 2px 0 0 12px;
  display: flex;
  align-items: flex-end;
  border-bottom: 4px solid #5c5c5c;
}
.file { position: relative; height: 23px; padding-top: 1px; }
.file svg { position: absolute; left: 0; top: 0; width: 100%; height: 100%; }
.file span, .file em { position: relative; }
.file em { font: bold 14px/16px "Noto Sans", sans-serif; color: #3c3c3c; margin-left: auto; }
.start { width: 126px; padding-left: 13px; color: #b4b4b4; }
.open { width: 130px; padding: 1px 18px 0 10px; color: #fff; }
.plus { align-self: center; padding-top: 1px; }

/* drawing area */
.canvas { flex: 1; min-height: 0; position: relative; background: #212830; }
.drawing { width: 100%; height: 100%; }
.fill-minor { fill: url(#minor); }
.fill-major { fill: url(#major); }
.ln { fill: none; stroke-width: 1; }
.w { stroke: #f4f4f4; }
.r { stroke: #ee0000; }
.y { stroke: #eeee00; }
.hot { stroke: #ff2828; }
.cad { font-family: Roboto, "Noto Sans CJK SC", sans-serif; font-weight: 300; text-anchor: middle; }
.red { fill: #ff0000; }
.yel { fill: #ffff00; }
.small { font-family: Inter, sans-serif; font-size: 18px; }
.zone { font-size: 24px; }
.large { font-family: Inter, sans-serif; font-size: 25px; }
.title { font-size: 25px; }
.cjk { font-size: 22px; }
.narrow { font-size: 9px; font-weight: 400; }
.date { font-size: 13px; font-weight: 400; }
.ratio { font-size: 16px; }
.axis { font-size: 18px; fill: #fff; }
.mtext { font: 500 24px "Liberation Serif", "Noto Serif CJK SC", "Noto Sans CJK SC", serif; fill: #fff; }
.viewlabel { font-size: 12px; fill: #f0f0f0; }
.cube { fill: #42484f; }
.cube-text { font-size: 20px; fill: #b4b6b9; }
.mark {
  position: absolute;
  right: 19px;
  bottom: 3px;
  display: flex;
  align-items: center;
  color: #fff;
  font: 700 17px/20px "Noto Sans CJK SC", sans-serif;
  text-decoration: none;
  -webkit-text-stroke: 2px #f03030;
  paint-order: stroke fill;
}
.mark span { font: bold 15px/20px "DejaVu Sans", sans-serif; }
```
